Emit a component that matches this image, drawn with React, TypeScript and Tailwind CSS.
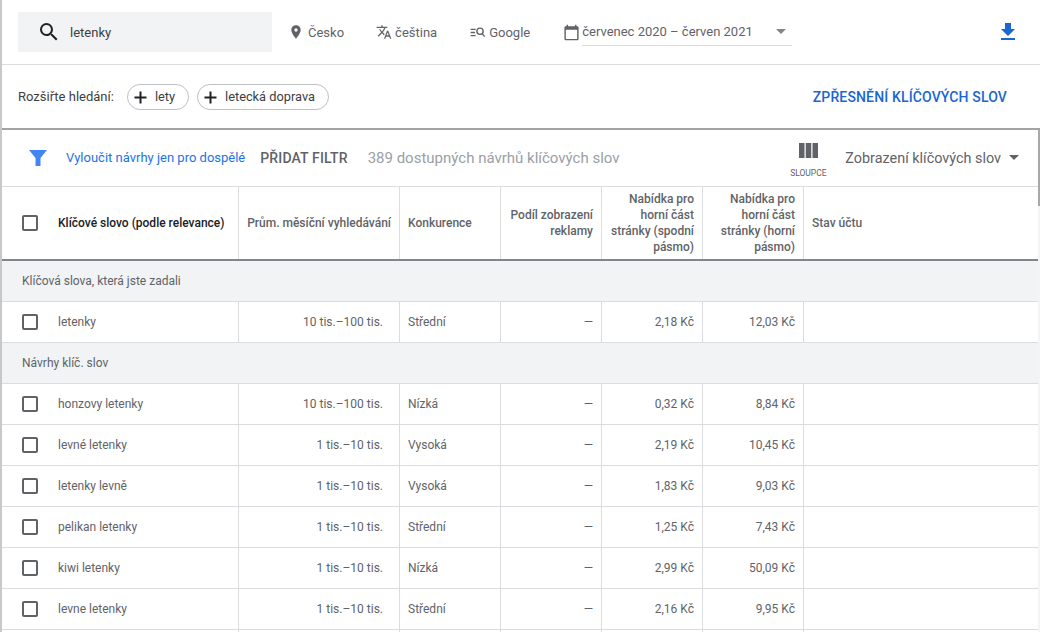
const rowGrid = "grid grid-cols-[237px_161px_101px_101px_101px_101px_1fr]"
const cell = "border-r border-[#dadce0] flex items-center px-2"

const header = [
  { label: "Prům. měsíční vyhledávání", right: true },
  { label: "Konkurence", right: false },
  { label: "Podíl zobrazení reklamy", right: true },
  { label: "Nabídka pro horní část stránky (spodní pásmo)", right: true },
  { label: "Nabídka pro horní část stránky (horní pásmo)", right: true },
]

const typed = [{ name: "letenky", searches: "10 tis.–100 tis.", comp: "Střední", low: "2,18 Kč", high: "12,03 Kč" }]

const ideas = [
  { name: "honzovy letenky", searches: "10 tis.–100 tis.", comp: "Nízká", low: "0,32 Kč", high: "8,84 Kč" },
  { name: "levné letenky", searches: "1 tis.–10 tis.", comp: "Vysoká", low: "2,19 Kč", high: "10,45 Kč" },
  { name: "letenky levně", searches: "1 tis.–10 tis.", comp: "Vysoká", low: "1,83 Kč", high: "9,03 Kč" },
  { name: "pelikan letenky", searches: "1 tis.–10 tis.", comp: "Střední", low: "1,25 Kč", high: "7,43 Kč" },
  { name: "kiwi letenky", searches: "1 tis.–10 tis.", comp: "Nízká", low: "2,99 Kč", high: "50,09 Kč" },
  { name: "levne letenky", searches: "1 tis.–10 tis.", comp: "Střední", low: "2,16 Kč", high: "9,95 Kč" },
]

function Icon({ d, size, color, className }: { d: string; size: number; color: string; className?: string }) {
  return (
    <svg width={size} height={size} viewBox="0 0 24 24" fill={color} className={`shrink-0 ${className ?? ""}`}>
      <path d={d} />
    </svg>
  )
}

function Checkbox() {
  return <span className="block w-4 h-4 shrink-0 rounded-[2px] border-2 border-[#5f6368]" />
}

function Row({ row }: { row: (typeof ideas)[number] }) {
  return (
    <div className={`${rowGrid} h-[41px] border-b border-[#dadce0] text-xs text-[#5f6368]`}>
      <div className={`${cell} gap-5 pl-5`}>
        <Checkbox />
        <span>{row.name}</span>
      </div>
      <div className={`${cell} justify-end pr-4`}>{row.searches}</div>
      <div className={cell}>{row.comp}</div>
      <div className={`${cell} justify-end`}>—</div>
      <div className={`${cell} justify-end`}>{row.low}</div>
      <div className={`${cell} justify-end`}>{row.high}</div>
      <div />
    </div>
  )
}

function GroupRow({ label }: { label: string }) {
  return (
    <div className="h-[41px] flex items-center pl-5 bg-[#f1f3f4] border-b border-[#dadce0] text-xs text-[#5f6368]">
      {label}
    </div>
  )
}

function Chip({ label }: { label: string }) {
  return (
    <div className="h-[26px] flex items-center gap-[7px] pl-[5px] pr-[13px] border border-[#bdc1c6] rounded-full text-[12.8px] text-[#3c4043]">
      <svg width="15" height="15" viewBox="0 0 15 15" fill="#202124" className="shrink-0">
        <path d="M6.5 1.5h2v5h5v2h-5v5h-2v-5h-5v-2h5z" />
      </svg>
      <span>{label}</span>
    </div>
  )
}

export default function App() {
  return (
    <div className="relative h-[632px] w-[1040px] overflow-hidden bg-white border-l-2 border-[#c8c8c8] font-['Roboto',sans-serif]">
      <div className="h-[65px] flex items-center pl-4 pr-5 border-b border-[#dadce0] text-[13px] text-[#5f6368]">
        <div className="w-[254px] h-10 flex items-center gap-[9px] pl-[19px] bg-[#f1f3f4] text-[#3c4043]">
          <Icon
            size={24}
            color="#202124"
            d="M15.5 14h-.79l-.28-.27A6.471 6.471 0 0 0 16 9.5 6.5 6.5 0 1 0 9.5 16c1.61 0 3.09-.59 4.23-1.57l.27.28v.79l5 4.99L20.49 19l-4.99-5zm-6 0C7.01 14 5 11.99 5 9.5S7.01 5 9.5 5 14 7.01 14 9.5 11.99 14 9.5 14z"
          />
          <span className="pt-[2px]">letenky</span>
        </div>
        <div className="flex items-center gap-1 ml-4">
          <Icon
            size={16}
            color="#5f6368"
            d="M12 2C8.13 2 5 5.13 5 9c0 5.25 7 13 7 13s7-7.75 7-13c0-3.87-3.13-7-7-7zm0 9.5a2.5 2.5 0 0 1 0-5 2.5 2.5 0 0 1 0 5z"
          />
          <span className="pt-[2px]">Česko</span>
        </div>
        <div className="flex items-center gap-[3px] ml-8">
          <Icon
            size={16}
            color="#5f6368"
            d="M12.87 15.07l-2.54-2.51.03-.03A17.52 17.52 0 0 0 14.07 6H17V4h-7V2H8v2H1v2h11.17C11.5 7.92 10.44 9.75 9 11.35 8.07 10.32 7.3 9.19 6.69 8h-2c.73 1.63 1.73 3.17 2.98 4.56l-5.09 5.02L4 19l5-5 3.11 3.11.76-2.04zM18.5 10h-2L12 22h2l1.12-3h4.75L21 22h2l-4.5-12zm-2.62 7l1.62-4.33L19.12 17h-3.24z"
          />
          <span className="pt-[2px]">čeština</span>
        </div>
        <div className="flex items-center gap-1 ml-[33px]">
          <svg width="15" height="15" viewBox="0 0 24 24" fill="none" stroke="#5f6368" strokeWidth="2.2" className="shrink-0">
            <path d="M1 7h8M1 12h7M1 17h8" />
            <circle cx="16" cy="10" r="5" />
            <path d="M19.5 14l4 4.5" />
          </svg>
          <span className="pt-[2px]">Google</span>
        </div>
        <div className="flex items-center ml-[33px]">
          <Icon
            size={17}
            color="#5f6368"
            className="mr-[2px]"
            d="M20 3h-1V1h-2v2H7V1H5v2H4c-1.1 0-2 .9-2 2v16c0 1.1.9 2 2 2h16c1.1 0 2-.9 2-2V5c0-1.1-.9-2-2-2zm0 18H4V8h16v13z"
          />
          <div className="w-[210px] h-[27px] flex items-center justify-between pr-[6px] border-b border-[#dadce0]">
            <span>červenec 2020 – červen 2021</span>
            <span className="w-0 h-0 border-x-[5px] border-x-transparent border-t-[5px] border-t-[#80868b]" />
          </div>
        </div>
        <Icon size={24} color="#1967d2" className="ml-auto" d="M19 9h-4V3H9v6H5l7 7 7-7zM5 18v2h14v-2H5z" />
      </div>

      <div className="h-[65px] flex items-center pt-[1px] pl-4 pr-[33px] border-b-2 border-[#a3a3a3] text-[13px] text-[#3c4043]">
        <span>Rozšiřte hledání:</span>
        <div className="flex items-center gap-2 ml-[13px]">
          <Chip label="lety" />
          <Chip label="letecká doprava" />
        </div>
        <span className="ml-auto text-sm font-medium tracking-[0.01em] text-[#1967d2]">ZPŘESNĚNÍ KLÍČOVÝCH SLOV</span>
      </div>

      <div className="h-[57px] flex items-center pl-[26px] pr-[21px] border-b border-[#dadce0]">
        <svg width="20" height="20" viewBox="0 0 20 20" fill="#4285f4" className="shrink-0">
          <path d="M1 2h18l-6.5 8v8h-5v-8z" />
        </svg>
        <span className="ml-[18px] text-[13px] text-[#1a73e8]">Vyloučit návrhy jen pro dospělé</span>
        <span className="ml-[15px] text-sm font-medium tracking-[0.01em] text-[#5f6368]">PŘIDAT FILTR</span>
        <span className="ml-5 text-[15px] text-[#9aa0a6]">389 dostupných návrhů klíčových slov</span>
        <div className="ml-auto flex flex-col items-center w-10 pt-[5px]">
          <svg width="19" height="15" viewBox="0 0 19 15" fill="#5f6368">
            <path d="M0 0h5.5v15H0zM6.75 0h5.5v15h-5.5zM13.5 0H19v15h-5.5z" />
          </svg>
          <span className="mt-[9px] text-[8.5px] leading-3 text-[#5f6368]">SLOUPCE</span>
        </div>
        <div className="ml-[17px] flex items-center gap-2 text-[14.4px] text-[#5f6368]">
          <span className="pt-[2px]">Zobrazení klíčových slov</span>
          <span className="w-0 h-0 border-x-[5px] border-x-transparent border-t-[5px] border-t-[#5f6368]" />
        </div>
      </div>

      <div className={`${rowGrid} h-[74px] border-b-2 border-[#80868b] text-xs font-medium text-[#5f6368]`}>
        <div className={`${cell} gap-5 pl-5 text-[#202124]`}>
          <Checkbox />
          <span>Klíčové slovo (podle relevance)</span>
        </div>
        {header.map((h) => (
          <div key={h.label} className={`${cell} ${h.right ? "justify-end text-right" : ""}`}>
            {h.label}
          </div>
        ))}
        <div className="flex items-center px-2">Stav účtu</div>
      </div>

      <GroupRow label="Klíčová slova, která jste zadali" />
      {typed.map((row) => (
        <Row key={row.name} row={row} />
      ))}
      <GroupRow label="Návrhy klíč. slov" />
      {ideas.map((row) => (
        <Row key={row.name} row={row} />
      ))}
      <div className={`${rowGrid} h-[41px]`}>
        <div className={cell} />
        <div className={cell} />
        <div className={cell} />
        <div className={cell} />
        <div className={cell} />
        <div className={cell} />
      </div>

      {/* page scrollbar sits over the right edge */}
      <div className="absolute right-0 top-[130px] bottom-0 w-[2px] bg-[#f4f4f4]">
        <div className="h-[76px] bg-[#a8a8a8]" />
      </div>
    </div>
  )
}
